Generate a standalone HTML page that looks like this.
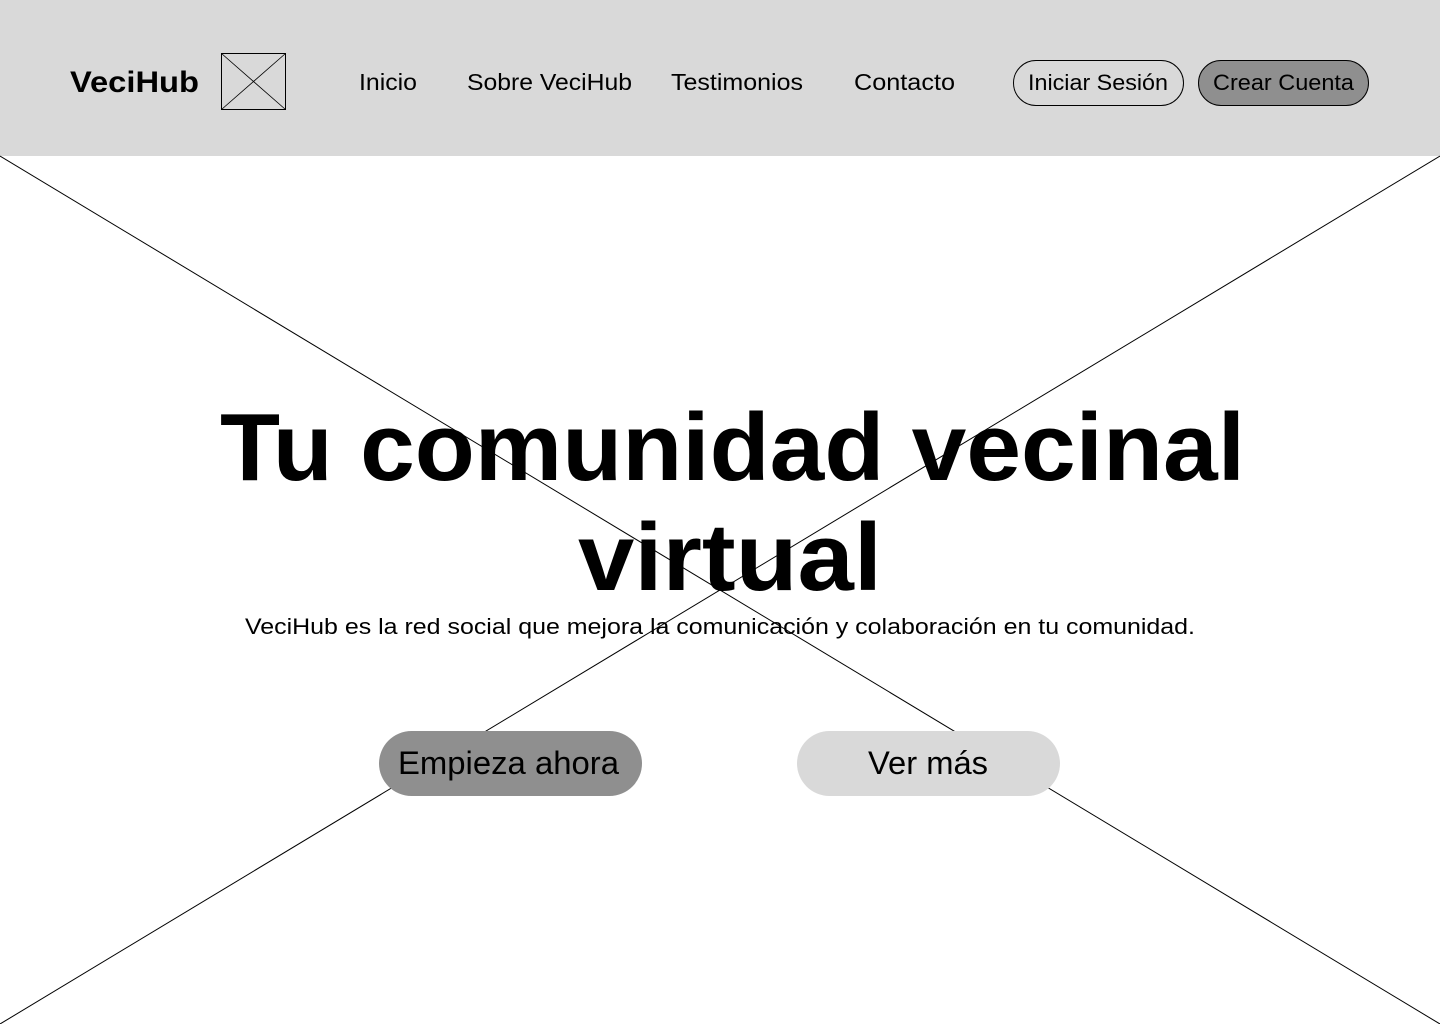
<!DOCTYPE html>
<html><head><meta charset="utf-8"><style>
html,body{margin:0;padding:0;background:#fff;width:1440px;height:1024px;overflow:hidden}
svg{display:block}
text{font-family:"Liberation Sans",sans-serif;fill:#000}
</style></head><body>
<svg width="1440" height="1024" viewBox="0 0 1440 1024" xmlns="http://www.w3.org/2000/svg">
<rect x="0" y="0" width="1440" height="156" fill="#d9d9d9"/>
<line x1="0" y1="156" x2="1440" y2="1024" stroke="#000" stroke-width="1"/>
<line x1="1440" y1="156" x2="0" y2="1024" stroke="#000" stroke-width="1"/>
<text x="70" y="92" font-size="30" font-weight="bold" textLength="129" lengthAdjust="spacingAndGlyphs">VeciHub</text>
<rect x="221.5" y="53.5" width="64" height="56" fill="none" stroke="#000" stroke-width="1"/>
<line x1="221.5" y1="53.5" x2="285.5" y2="109.5" stroke="#000" stroke-width="0.8"/>
<line x1="285.5" y1="53.5" x2="221.5" y2="109.5" stroke="#000" stroke-width="0.8"/>
<text x="359" y="90" font-size="23" textLength="58" lengthAdjust="spacingAndGlyphs">Inicio</text>
<text x="467" y="90" font-size="23" textLength="165" lengthAdjust="spacingAndGlyphs">Sobre VeciHub</text>
<text x="671" y="90" font-size="23" textLength="132" lengthAdjust="spacingAndGlyphs">Testimonios</text>
<text x="854" y="90" font-size="23" textLength="101" lengthAdjust="spacingAndGlyphs">Contacto</text>
<rect x="1013.5" y="60.5" width="170" height="45" rx="22.5" fill="none" stroke="#000" stroke-width="1"/>
<text x="1028" y="90" font-size="22" textLength="140" lengthAdjust="spacingAndGlyphs">Iniciar Sesión</text>
<rect x="1198.5" y="60.5" width="170" height="45" rx="22.5" fill="#8f8f8f" stroke="#000" stroke-width="1"/>
<text x="1213" y="90" font-size="22" textLength="141" lengthAdjust="spacingAndGlyphs">Crear Cuenta</text>
<text x="220" y="480" font-size="96" font-weight="bold" textLength="1025" lengthAdjust="spacingAndGlyphs">Tu comunidad vecinal</text>
<text x="578" y="590" font-size="96" font-weight="bold" textLength="304" lengthAdjust="spacingAndGlyphs">virtual</text>
<text x="245" y="634" font-size="22" textLength="950" lengthAdjust="spacingAndGlyphs">VeciHub es la red social que mejora la comunicación y colaboración en tu comunidad.</text>
<rect x="379" y="731" width="263" height="65" rx="32.5" fill="#8f8f8f"/>
<text x="398" y="774" font-size="32" textLength="221" lengthAdjust="spacingAndGlyphs">Empieza ahora</text>
<rect x="797" y="731" width="263" height="65" rx="32.5" fill="#d9d9d9"/>
<text x="868" y="774" font-size="32" textLength="120" lengthAdjust="spacingAndGlyphs">Ver más</text>
</svg>
</body></html>
